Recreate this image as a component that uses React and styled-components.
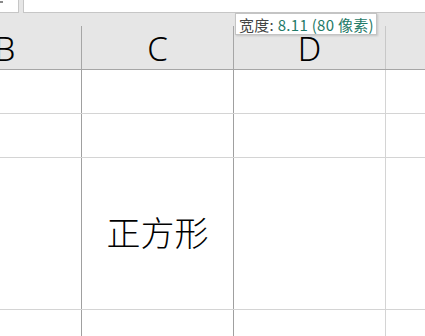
import React from "react";
import styled, { createGlobalStyle } from "styled-components";

const Global = createGlobalStyle`
  html, body { margin: 0; padding: 0; background: #ffffff; overflow: hidden; }
  body { width: 425px; height: 336px; font-family: "Noto Sans", "Noto Sans CJK SC", sans-serif; }
`;

const Page = styled.div`
  position: relative;
  width: 425px;
  height: 336px;
  overflow: hidden;
  background: #ffffff;
`;

const TopStrip = styled.div`
  display: flex;
  height: 13px;
  background: #e6e6e6;
  gap: 4px;
`;

const NameBox = styled.div`
  box-sizing: border-box;
  width: 19px;
  height: 13px;
  background: #ffffff;
  border-right: 1px solid #c6c6c6;
  border-bottom: 1px solid #c6c6c6;
  position: relative;
`;

const Caret = styled.span`
  position: absolute;
  left: 0;
  top: 1px;
  width: 3px;
  height: 2px;
  background: #8a8a8a;
`;

const FormulaBox = styled.div`
  box-sizing: border-box;
  flex: 1;
  height: 13px;
  background: #ffffff;
  border-left: 1px solid #c6c6c6;
  border-bottom: 1px solid #c6c6c6;
`;

const Sheet = styled.div`
  margin-left: -71px;
`;

const HeaderRow = styled.div`
  box-sizing: border-box;
  display: grid;
  grid-template-columns: 153px 152px 152px 1fr;
  align-items: end;
  height: 57px;
  background: #e6e6e6;
  border-bottom: 1px solid #a6a6a6;
`;

const HeaderCell = styled.div`
  box-sizing: border-box;
  height: 43px;
  display: flex;
  justify-content: center;
  align-items: flex-start;
  padding-top: 6px;
  border-right: ${(p) => (p.$last ? "none" : `1px solid ${p.$dark ? "#a6a6a6" : "#c8c8c8"}`)};
  font-family: "Noto Sans", "Liberation Sans", sans-serif;
  font-size: 33px;
  font-weight: 300;
  line-height: 1;
  color: #000000;
`;

const Row = styled.div`
  box-sizing: border-box;
  display: grid;
  grid-template-columns: 153px 152px 152px 1fr;
  height: ${(p) => p.$h}px;
  border-bottom: ${(p) => (p.$noBorder ? "none" : "1px solid #d4d4d4")};
`;

const Cell = styled.div`
  box-sizing: border-box;
  display: flex;
  justify-content: center;
  align-items: center;
  padding-bottom: 4px;
  border-right: ${(p) => (p.$last ? "none" : `1px solid ${p.$dark ? "#a0a0a0" : "#d4d4d4"}`)};
  font-family: "Noto Sans CJK SC", sans-serif;
  font-size: 34px;
  font-weight: 300;
  color: #000000;
`;

const Tooltip = styled.div`
  position: absolute;
  left: 235px;
  top: 13px;
  box-sizing: border-box;
  width: 142px;
  height: 22px;
  background: #ffffff;
  border: 1px solid #c4c4c4;
  box-shadow: 1px 1px 2px rgba(0, 0, 0, 0.15);
  display: flex;
  align-items: center;
  padding-left: 3px;
  font-family: "Noto Sans CJK SC", sans-serif;
  font-size: 15px;
  letter-spacing: 0.3px;
  white-space: nowrap;
  line-height: 1;
`;

const Label = styled.span`
  color: #444444;
`;

const Value = styled.span`
  color: #1f7a68;
`;

const rows = [
  { h: 44 },
  { h: 44 },
  { h: 152, text: "正方形" },
  { h: 40, noBorder: true },
];

export default function App() {
  return (
    <Page>
      <Global />
      <TopStrip>
        <NameBox>
          <Caret />
        </NameBox>
        <FormulaBox />
      </TopStrip>
      <Sheet>
        <HeaderRow>
          <HeaderCell $dark>B</HeaderCell>
          <HeaderCell $dark>C</HeaderCell>
          <HeaderCell>D</HeaderCell>
          <HeaderCell $last />
        </HeaderRow>
        {rows.map((r, i) => (
          <Row key={i} $h={r.h} $noBorder={r.noBorder}>
            <Cell $dark />
            <Cell $dark>{r.text}</Cell>
            <Cell />
            <Cell $last />
          </Row>
        ))}
      </Sheet>
      <Tooltip>
        <Label>宽度:&nbsp;</Label>
        <Value>8.11 (80 像素)</Value>
      </Tooltip>
    </Page>
  );
}
